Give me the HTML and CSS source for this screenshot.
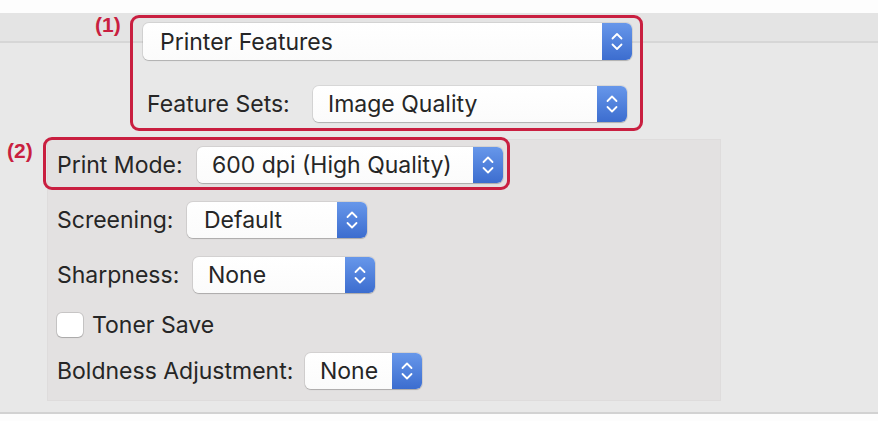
FILE: index.html
```html
<!DOCTYPE html>
<html>
<head>
<meta charset="utf-8">
<link rel="stylesheet" href="styles.css">
</head>
<body>
<div class="window">
  <div class="box box1">
    <span class="tag tag1">(1)</span>
    <div class="popup popup-features">
      <span class="value">Printer Features</span>
      <span class="stepper"><svg viewBox="0 0 30 37" width="30" height="37"><path d="M10.5 15.5 L15 11 L19.5 15.5 M10.5 21.5 L15 26 L19.5 21.5" fill="none" stroke="#fff" stroke-width="1.8" stroke-linecap="round" stroke-linejoin="round"/></svg></span>
    </div>
    <div class="row row-sets">
      <span class="label label-sets">Feature Sets:</span>
      <div class="popup popup-sets">
        <span class="value">Image Quality</span>
        <span class="stepper"><svg viewBox="0 0 30 36" width="30" height="36"><path d="M10.5 15 L15 10.5 L19.5 15 M10.5 21 L15 25.5 L19.5 21" fill="none" stroke="#fff" stroke-width="1.8" stroke-linecap="round" stroke-linejoin="round"/></svg></span>
      </div>
    </div>
  </div>

  <div class="group">
    <div class="box box2">
      <span class="tag tag2">(2)</span>
      <div class="row">
        <span class="label label-mode">Print Mode:</span>
        <div class="popup popup-mode">
          <span class="value">600 dpi (High Quality)</span>
          <span class="stepper"><svg viewBox="0 0 30 36" width="30" height="36"><path d="M10.5 15 L15 10.5 L19.5 15 M10.5 21 L15 25.5 L19.5 21" fill="none" stroke="#fff" stroke-width="1.8" stroke-linecap="round" stroke-linejoin="round"/></svg></span>
        </div>
      </div>
    </div>

    <div class="row row-screening">
      <span class="label label-screening">Screening:</span>
      <div class="popup popup-screening">
        <span class="value">Default</span>
        <span class="stepper"><svg viewBox="0 0 30 36" width="30" height="36"><path d="M10.5 15 L15 10.5 L19.5 15 M10.5 21 L15 25.5 L19.5 21" fill="none" stroke="#fff" stroke-width="1.8" stroke-linecap="round" stroke-linejoin="round"/></svg></span>
      </div>
    </div>

    <div class="row row-sharpness">
      <span class="label label-sharpness">Sharpness:</span>
      <div class="popup popup-sharpness">
        <span class="value">None</span>
        <span class="stepper"><svg viewBox="0 0 30 36" width="30" height="36"><path d="M10.5 15 L15 10.5 L19.5 15 M10.5 21 L15 25.5 L19.5 21" fill="none" stroke="#fff" stroke-width="1.8" stroke-linecap="round" stroke-linejoin="round"/></svg></span>
      </div>
    </div>

    <label class="row row-toner">
      <span class="checkbox"></span>
      <span class="check-label">Toner Save</span>
    </label>

    <div class="row row-bold">
      <span class="label label-bold">Boldness Adjustment:</span>
      <div class="popup popup-bold">
        <span class="value">None</span>
        <span class="stepper"><svg viewBox="0 0 30 36" width="30" height="36"><path d="M10.5 15 L15 10.5 L19.5 15 M10.5 21 L15 25.5 L19.5 21" fill="none" stroke="#fff" stroke-width="1.8" stroke-linecap="round" stroke-linejoin="round"/></svg></span>
      </div>
    </div>
  </div>
</div>
</body>
</html>
```

FILE: styles.css
```css
* { box-sizing: border-box; }

html, body {
  margin: 0;
  padding: 0;
  background: #fdfdfd;
  width: 878px;
  height: 421px;
  overflow: hidden;
}

body {
  font-family: Inter, "Liberation Sans", sans-serif;
  font-size: 23px;
  color: #262626;
}

.window {
  margin-top: 13px;
  height: 401px;
  background:
    linear-gradient(#e4e4e4 0, #e4e4e4 28px, #d6d6d6 28px, #d6d6d6 30px, transparent 30px),
    #e8e8e8;
  border-bottom: 2px solid #d2d2d2;
  display: flex;
  flex-direction: column;
  align-items: flex-start;
}

.box {
  position: relative;
  border: 3px solid #c91f40;
  border-radius: 9px;
}

.tag {
  position: absolute;
  font-family: "Liberation Sans", Arial, sans-serif;
  font-weight: bold;
  font-size: 21px;
  color: #c91f40;
  line-height: 1;
}

.tag1 { left: -38px; top: -4px; }
.tag2 { left: -39px; top: 0px; }

.box1 {
  margin-left: 130px;
  margin-top: 2px;
  width: 513px;
  padding: 5px 8px 6px 10px;
}

.row {
  display: flex;
  align-items: center;
}

.label {
  white-space: nowrap;
  flex: none;
}

.label-sets { width: 166px; }
.label-mode { width: 140px; }
.label-screening { width: 130px; }
.label-sharpness { width: 136px; }
.label-bold { width: 248px; }

.row-sets {
  margin-top: 26px;
  padding-left: 4px;
}

.popup {
  display: flex;
  align-items: center;
  height: 36px;
  background: linear-gradient(#ffffff, #fbfbfb);
  border-radius: 6px;
  box-shadow: 0 0 0 1px rgba(0,0,0,0.07), 0 1px 1px rgba(0,0,0,0.18);
  padding-left: 15px;
  overflow: hidden;
}

.value {
  flex: 1;
  white-space: nowrap;
}

.stepper {
  width: 30px;
  align-self: stretch;
  background: linear-gradient(#6797ea, #3c6dcf);
  display: flex;
  align-items: center;
  justify-content: center;
}

.stepper svg { display: block; }

.popup-features { width: 489px; height: 37px; padding-left: 17px; }
.popup-sets { width: 314px; }

.group {
  margin-left: 48px;
  margin-top: 9px;
  width: 672px;
  height: 260px;
  background: #e3e1e1;
  box-shadow: 0 0 0 1px #dedcdc;
  display: flex;
  flex-direction: column;
  align-items: flex-start;
  padding-left: 9px;
}

.box2 {
  margin-top: -3px;
  margin-left: -14px;
  width: 467px;
  padding: 7px 4px 4px 11px;
}

.popup-mode { width: 306px; }

.row-screening { margin-top: 12px; }
.popup-screening { width: 180px; padding-left: 17px; }

.row-sharpness { margin-top: 19px; }
.popup-sharpness { width: 182px; }

.row-toner { margin-top: 20px; height: 24px; }
.checkbox {
  width: 26px;
  height: 24px;
  background: #fff;
  border-radius: 5px;
  box-shadow: 0 0 0 1px rgba(0,0,0,0.12), 0 1px 1px rgba(0,0,0,0.15);
  margin-right: 9px;
}

.row-bold { margin-top: 16px; }
.popup-bold { width: 117px; }
```
